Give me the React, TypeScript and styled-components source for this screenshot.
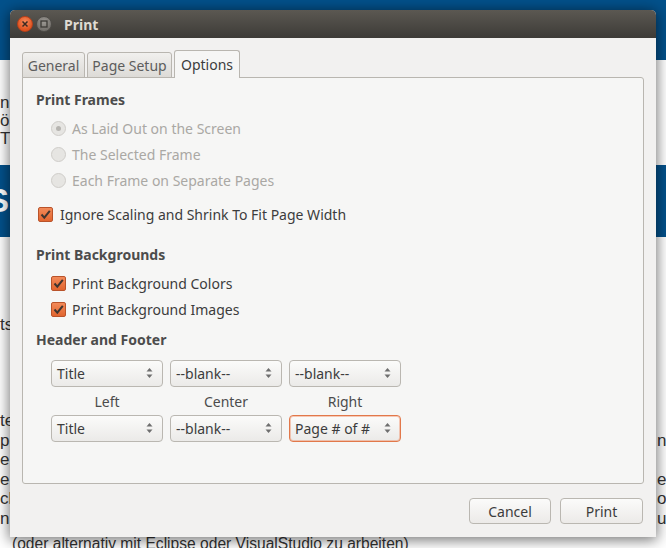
import React from 'react';
import styled, { createGlobalStyle } from 'styled-components';

const Global = createGlobalStyle`
  html, body { margin: 0; padding: 0; width: 666px; height: 548px; overflow: hidden; background: #fff; }
  #root { width: 666px; height: 548px; }
`;

const UI = `"Noto Sans", "Open Sans", "DejaVu Sans", sans-serif`;

/* ---------- background web page ---------- */
const Page = styled.div`
  position: relative;
  width: 666px;
  height: 548px;
  overflow: hidden;
  background: #ffffff;
  font-family: "Liberation Sans", Arial, sans-serif;
  font-size: 17px;
  color: #333;
`;
const Band = styled.div<{ $h: number; $mt?: number }>`
  height: ${(p) => p.$h}px;
  margin-top: ${(p) => p.$mt ?? 0}px;
  background: #03518b;
  color: #fff;
  overflow: hidden;
`;
const BannerLetter = styled.div`
  font-weight: bold;
  font-size: 33px;
  line-height: 72px;
  margin-left: -13px;
`;
const TextBlock = styled.div<{ $mt: number }>`
  margin-top: ${(p) => p.$mt}px;
  display: flex;
  flex-direction: column;
`;
const PLine = styled.div<{ $h?: number; $mt?: number; $pl?: number; $fs?: number }>`
  height: ${(p) => p.$h ?? 19.5}px;
  line-height: ${(p) => p.$h ?? 19.5}px;
  margin-top: ${(p) => p.$mt ?? 0}px;
  padding-left: ${(p) => p.$pl ?? 0}px;
  font-size: ${(p) => p.$fs ?? 17}px;
  display: grid;
  grid-template-columns: 657px 1fr;
  white-space: nowrap;
  overflow: hidden;
`;
const Cell = styled.span`
  overflow: hidden;
`;

/* ---------- dialog ---------- */
const Dialog = styled.div`
  position: absolute;
  left: 10px;
  top: 10px;
  width: 646px;
  height: 527px;
  display: flex;
  flex-direction: column;
  background: #f2f1f0;
  border-radius: 5px 5px 0 0;
  box-shadow: 0 2px 14px 1px rgba(0, 0, 0, 0.55);
  font-family: ${UI};
  font-size: 14px;
  color: #3c3c3c;
`;
const TitleBar = styled.div`
  flex: none;
  height: 28px;
  display: flex;
  align-items: center;
  padding-left: 7px;
  background: linear-gradient(#5b5852, #3d3b37);
  border-radius: 5px 5px 0 0;
`;
const WinBtn = styled.div<{ $close?: boolean }>`
  width: 16px;
  height: 16px;
  border-radius: 50%;
  margin-right: 3px;
  display: flex;
  align-items: center;
  justify-content: center;
  box-sizing: border-box;
  border: 1px solid ${(p) => (p.$close ? '#b8401a' : '#4e4c48')};
  background: ${(p) =>
    p.$close
      ? 'radial-gradient(circle at 50% 35%, #f68a5c, #e0531f 70%)'
      : 'radial-gradient(circle at 50% 35%, #9b9893, #75726d 70%)'};
`;
const Title = styled.div`
  margin-left: 9px;
  font-weight: bold;
  font-size: 14px;
  color: #dfdbd2;
`;
const Body = styled.div`
  flex: 1;
  display: flex;
  flex-direction: column;
  padding: 12px 12px 13px 12px;
`;
const Tabs = styled.div`
  flex: none;
  height: 28px;
  display: flex;
  align-items: flex-end;
  gap: 2px;
  position: relative;
  z-index: 1;
  margin-bottom: -1px;
`;
const Tab = styled.div<{ $active?: boolean; $w: number }>`
  box-sizing: border-box;
  width: ${(p) => p.$w}px;
  height: ${(p) => (p.$active ? 28 : 26)}px;
  padding-top: ${(p) => (p.$active ? 0 : 1)}px;
  border: 1px solid #b9b6b0;
  border-bottom: ${(p) => (p.$active ? 'none' : '1px solid #b9b6b0')};
  border-radius: 3px 3px 0 0;
  display: flex;
  align-items: center;
  justify-content: center;
  font-size: 14px;
  color: ${(p) => (p.$active ? '#3c3c3c' : '#5d5d5d')};
  background: ${(p) => (p.$active ? '#f6f6f5' : 'linear-gradient(#f1f0ee, #dddbd7)')};
`;
const Frame = styled.div`
  flex: none;
  height: 407px;
  box-sizing: border-box;
  border: 1px solid #b9b6b0;
  border-radius: 0 3px 3px 3px;
  background: #f6f6f5;
  padding: 12px 13px 0 13px;
  display: flex;
  flex-direction: column;
`;
const Heading = styled.div<{ $mt?: number }>`
  height: 20px;
  line-height: 20px;
  margin-top: ${(p) => p.$mt ?? 0}px;
  font-weight: bold;
  color: #4c4c4c;
`;
const OptionRow = styled.div<{ $indent: number; $mt?: number; $disabled?: boolean }>`
  height: 26px;
  margin-top: ${(p) => p.$mt ?? 0}px;
  padding-left: ${(p) => p.$indent}px;
  display: flex;
  align-items: center;
  gap: ${(p) => (p.$indent > 5 ? 6 : 7)}px;
  color: ${(p) => (p.$disabled ? '#aaa8a4' : '#3c3c3c')};
`;
const Radio = styled.div<{ $on?: boolean }>`
  width: 15px;
  height: 15px;
  box-sizing: border-box;
  border-radius: 50%;
  border: 1px solid #cfcdc9;
  background: #e6e5e2;
  display: flex;
  align-items: center;
  justify-content: center;
  &::after {
    content: '';
    display: ${(p) => (p.$on ? 'block' : 'none')};
    width: 5px;
    height: 5px;
    border-radius: 50%;
    background: #b6b4b0;
  }
`;
const CheckBox = styled.div`
  width: 15px;
  height: 15px;
  box-sizing: border-box;
  border-radius: 2px;
  border: 1px solid #b9532a;
  background: linear-gradient(#f28a59, #e1652f);
  display: flex;
  align-items: center;
  justify-content: center;
`;
const ComboRow = styled.div<{ $mt?: number }>`
  margin-top: ${(p) => p.$mt ?? 0}px;
  padding-left: 15px;
  display: flex;
  gap: 7px;
`;
const Combo = styled.div<{ $focus?: boolean }>`
  width: 112px;
  height: 27px;
  box-sizing: border-box;
  border-radius: 4px;
  border: 1px solid ${(p) => (p.$focus ? '#e2784a' : '#bab7b1')};
  box-shadow: ${(p) => (p.$focus ? 'inset 0 0 0 1px rgba(240,140,100,0.45)' : 'none')};
  background: linear-gradient(#fbfbfa, #ebeae8);
  display: flex;
  align-items: center;
  justify-content: space-between;
  padding: 0 9px 1px 5px;
  font-size: 14px;
  color: #3c3c3c;
`;
const LabelRow = styled.div`
  height: 28px;
  padding-left: 15px;
  display: flex;
  gap: 7px;
  align-items: center;
`;
const ColLabel = styled.div`
  width: 112px;
  text-align: center;
  font-size: 14px;
  color: #4c4c4c;
  padding-top: 1px;
`;
const Buttons = styled.div`
  flex: none;
  margin-top: 14px;
  display: flex;
  justify-content: flex-end;
  gap: 9px;
  padding-right: 1px;
`;
const Button = styled.div<{ $w: number }>`
  width: ${(p) => p.$w}px;
  height: 26px;
  box-sizing: border-box;
  border: 1px solid #bab7b1;
  border-radius: 4px;
  background: linear-gradient(#fbfbfa, #eceae8);
  display: flex;
  align-items: center;
  justify-content: center;
  font-size: 14px;
  color: #3c3c3c;
  padding-top: 1px;
`;

const Check = () => (
  <svg width="11" height="11" viewBox="0 0 11 11">
    <path d="M1.5 5.5 L4.3 8.6 L9.8 1.8" fill="none" stroke="#3e3530" strokeWidth="2" />
  </svg>
);

const Arrows = () => (
  <svg width="7" height="12" viewBox="0 0 7 12">
    <path d="M0.5 4.5 L3.5 1 L6.5 4.5 Z" fill="#6e6e6e" />
    <path d="M0.5 7.5 L3.5 11 L6.5 7.5 Z" fill="#6e6e6e" />
  </svg>
);

const CloseGlyph = () => (
  <svg width="8" height="8" viewBox="0 0 8 8">
    <path d="M1.5 1.5 L6.5 6.5 M6.5 1.5 L1.5 6.5" stroke="#3c2a22" strokeWidth="1.5" />
  </svg>
);
const MaxGlyph = () => (
  <svg width="8" height="8" viewBox="0 0 8 8">
    <rect x="1" y="1" width="6" height="6" fill="none" stroke="#3c3b37" strokeWidth="1.3" />
  </svg>
);

const introLines = ['n der', 'ösung', 'Tipps'];
const lowerLines: [string, string][] = [
  ['te', ''],
  ['po', 'n c'],
  ['ei', ''],
  ['eic', 'ed'],
  ['cl', 'on'],
  ['n', 'ur'],
];

export default function App() {
  return (
    <>
      <Global />
      <Page>
        <Band $h={60} />
        <TextBlock $mt={34}>
          {introLines.map((t) => (
            <PLine key={t} $h={18}>
              <Cell>{t}</Cell>
              <Cell />
            </PLine>
          ))}
        </TextBlock>
        <Band $h={72} $mt={17}>
          <BannerLetter>S</BannerLetter>
        </Band>
        <TextBlock $mt={78}>
          <PLine $h={20}>
            <Cell>ts und</Cell>
            <Cell />
          </PLine>
        </TextBlock>
        <TextBlock $mt={76}>
          {lowerLines.map(([l, r], i) => (
            <PLine key={i}>
              <Cell>{l}</Cell>
              <Cell>{r}</Cell>
            </PLine>
          ))}
          <PLine $mt={6} $pl={12} $fs={15.6}>
            <Cell>(oder alternativ mit Eclipse oder VisualStudio zu arbeiten)</Cell>
            <Cell />
          </PLine>
        </TextBlock>

        <Dialog>
          <TitleBar>
            <WinBtn $close>
              <CloseGlyph />
            </WinBtn>
            <WinBtn>
              <MaxGlyph />
            </WinBtn>
            <Title>Print</Title>
          </TitleBar>
          <Body>
            <Tabs>
              <Tab $w={63}>General</Tab>
              <Tab $w={85}>Page Setup</Tab>
              <Tab $w={66} $active>
                Options
              </Tab>
            </Tabs>
            <Frame>
              <Heading>Print Frames</Heading>
              <OptionRow $indent={15} $mt={5} $disabled>
                <Radio $on />
                As Laid Out on the Screen
              </OptionRow>
              <OptionRow $indent={15} $disabled>
                <Radio />
                The Selected Frame
              </OptionRow>
              <OptionRow $indent={15} $disabled>
                <Radio />
                Each Frame on Separate Pages
              </OptionRow>
              <OptionRow $indent={2} $mt={8}>
                <CheckBox>
                  <Check />
                </CheckBox>
                Ignore Scaling and Shrink To Fit Page Width
              </OptionRow>
              <Heading $mt={18}>Print Backgrounds</Heading>
              <OptionRow $indent={15} $mt={5}>
                <CheckBox>
                  <Check />
                </CheckBox>
                Print Background Colors
              </OptionRow>
              <OptionRow $indent={15}>
                <CheckBox>
                  <Check />
                </CheckBox>
                Print Background Images
              </OptionRow>
              <Heading $mt={8}>Header and Footer</Heading>
              <ComboRow $mt={10}>
                <Combo>
                  Title
                  <Arrows />
                </Combo>
                <Combo>
                  --blank--
                  <Arrows />
                </Combo>
                <Combo>
                  --blank--
                  <Arrows />
                </Combo>
              </ComboRow>
              <LabelRow>
                <ColLabel>Left</ColLabel>
                <ColLabel>Center</ColLabel>
                <ColLabel>Right</ColLabel>
              </LabelRow>
              <ComboRow>
                <Combo>
                  Title
                  <Arrows />
                </Combo>
                <Combo>
                  --blank--
                  <Arrows />
                </Combo>
                <Combo $focus>
                  Page # of #
                  <Arrows />
                </Combo>
              </ComboRow>
            </Frame>
            <Buttons>
              <Button $w={82}>Cancel</Button>
              <Button $w={83}>Print</Button>
            </Buttons>
          </Body>
        </Dialog>
      </Page>
    </>
  );
}
